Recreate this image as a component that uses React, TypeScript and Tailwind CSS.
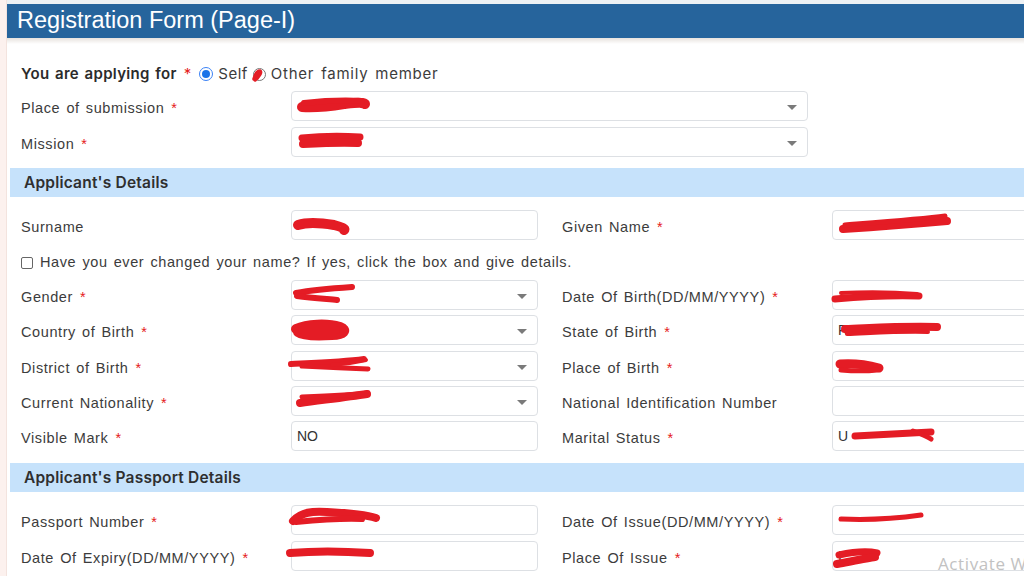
import React from "react";

const RED = "#e41c25";

type Scr = { d: string; w: number };

function Scribble({ s }: { s: Scr[] }) {
  return (
    <svg
      className="absolute left-0 top-0 overflow-visible pointer-events-none"
      width="10"
      height="10"
    >
      {s.map((p, i) => (
        <path
          key={i}
          d={p.d}
          stroke={RED}
          strokeWidth={p.w}
          strokeLinecap="round"
          strokeLinejoin="round"
          fill="none"
        />
      ))}
    </svg>
  );
}

function Caret() {
  return (
    <svg className="absolute right-[10px] top-[13px]" width="10" height="5" viewBox="0 0 10 5">
      <path d="M0 0 L10 0 L5 5 Z" fill="#7a7a7a" />
    </svg>
  );
}

function Field({
  select,
  value,
  s,
  w = "w-[247px]",
}: {
  select?: boolean;
  value?: string;
  s?: Scr[];
  w?: string;
}) {
  return (
    <div
      className={`relative ${w} h-[30px] shrink-0 rounded-[4px] border border-[#dde0e4] bg-white flex items-center pl-[5px] text-[14px] text-[#333]`}
    >
      {value && <span>{value}</span>}
      {select && <Caret />}
      {s && <Scribble s={s} />}
    </div>
  );
}

function Label({ text, req }: { text: string; req?: boolean }) {
  return (
    <div className="w-[270px] shrink-0 text-[14.5px] text-[#3c3c3c] tracking-[0.6px] [word-spacing:1.5px] pt-[6px]">
      {text}
      {req && <span className="text-[#e52020] ml-[7px]">*</span>}
    </div>
  );
}

function Section({ title }: { title: string }) {
  return (
    <div className="h-[29px] w-[1014px] bg-[#c6e2fb] flex items-center pl-[14px] font-['Inter',sans-serif] font-semibold text-[15.5px] text-[#2f2f2f] tracking-[0.2px]">
      {title}
    </div>
  );
}

function Row({
  mt,
  l,
  r,
}: {
  mt: string;
  l: [string, boolean, React.ReactNode];
  r?: [string, boolean, React.ReactNode];
}) {
  return (
    <div className={`flex items-center pl-[11px] h-[30px] ${mt}`}>
      <Label text={l[0]} req={l[1]} />
      {l[2]}
      {r && (
        <>
          <div className="w-[24px] shrink-0" />
          <Label text={r[0]} req={r[1]} />
          {r[2]}
        </>
      )}
    </div>
  );
}

export default function App() {
  return (
    <div className="w-[1024px] h-[576px] overflow-hidden relative bg-white flex font-['Liberation_Sans',Arial,sans-serif]">
      <div className="w-[7px] shrink-0 bg-[#fcf1ee] border-r border-[#f3e3de]" />
      <div className="flex-1 flex flex-col min-w-0">
        <div className="h-[4px] bg-[#edf1f4]" />
        <div className="h-[34px] bg-[#26649c] flex items-center pl-[10px] text-white text-[23.5px]">
          Registration Form (Page-I)
        </div>
        <div className="h-[6px] bg-gradient-to-b from-[#e7e2dd] to-white" />

        <div className="pl-[3px] flex flex-col">
          {/* applying for */}
          <div className="mt-[20px] h-[20px] pl-[11px] flex items-center font-['Inter',sans-serif] text-[15px]">
            <span className="font-semibold text-[#2b2b2b] tracking-[0.3px] [word-spacing:1.5px]">
              You are applying for
            </span>
            <span className="text-[#e52020] ml-[7px]">*</span>
            <span className="ml-[8px] w-[14px] h-[14px] rounded-full border border-[#3b82f6] flex items-center justify-center bg-white">
              <span className="w-[8px] h-[8px] rounded-full bg-[#1a73e8]" />
            </span>
            <span className="ml-[5px] text-[#3c3c3c] text-[15px] tracking-[0.5px]">Self</span>
            <span className="relative ml-[5px] w-[13px] h-[13px] rounded-full border border-[#777] bg-white">
              <svg className="absolute left-0 top-0 overflow-visible" width="10" height="10">
                <path d="M0 10 C1 6, 3 2, 6 2 C8 3, 5 8, 1 11" stroke={RED} strokeWidth="3.5" strokeLinecap="round" fill={RED} />
              </svg>
            </span>
            <span className="ml-[5px] text-[#3c3c3c] text-[15px] tracking-[0.75px] [word-spacing:2px]">
              Other family member
            </span>
          </div>

          <Row
            mt="mt-[7px]"
            l={[
              "Place of submission",
              true,
              <Field
                select
                w="w-[517px]"
                s={[
                  { d: "M10 15 C25 16, 40 14, 52 12 C62 11, 70 10, 73 12", w: 10 },
                  { d: "M12 11 C30 9, 50 8, 70 9", w: 6 },
                ]}
              />,
            ]}
          />
          <Row
            mt="mt-[6px]"
            l={[
              "Mission",
              true,
              <Field
                select
                w="w-[517px]"
                s={[
                  { d: "M10 10 C30 8, 50 8, 68 9", w: 7 },
                  { d: "M11 16 C30 15, 50 14, 66 15", w: 8 },
                ]}
              />,
            ]}
          />

          <div className="mt-[11px]">
            <Section title="Applicant's Details" />
          </div>

          <Row
            mt="mt-[13px]"
            l={[
              "Surname",
              false,
              <Field
                s={[
                  { d: "M6 14 C15 11, 30 12, 42 14 C50 16, 54 18, 52 19", w: 10 },
                ]}
              />,
            ]}
            r={[
              "Given Name",
              true,
              <Field
                s={[
                  { d: "M10 18 C40 16, 80 13, 114 10", w: 8 },
                  { d: "M12 14 C50 11, 90 8, 112 5", w: 5 },
                ]}
              />,
            ]}
          />

          <div className="mt-[13px] h-[20px] pl-[11px] flex items-center text-[14.5px] text-[#3c3c3c] tracking-[0.6px] [word-spacing:1.5px]">
            <span className="w-[12px] h-[12px] rounded-[2px] border border-[#666] bg-white mr-[7px] shrink-0" />
            Have you ever changed your name? If yes, click the box and give details.
          </div>

          <Row
            mt="mt-[7px]"
            l={[
              "Gender",
              true,
              <Field
                select
                s={[
                  { d: "M4 12 C20 9, 45 7, 60 6", w: 6 },
                  { d: "M5 15 C20 17, 35 18, 45 19", w: 6 },
                ]}
              />,
            ]}
            r={[
              "Date Of Birth(DD/MM/YYYY)",
              true,
              <Field
                s={[
                  { d: "M2 18 C25 16, 55 14, 86 15", w: 7 },
                  { d: "M8 12 C30 11, 60 11, 84 13", w: 4 },
                ]}
              />,
            ]}
          />
          <Row
            mt="mt-[5.25px]"
            l={[
              "Country of Birth",
              true,
              <Field
                select
                s={[
                  { d: "M4 13 C15 8, 35 7, 48 11 C56 14, 52 19, 40 19 C25 20, 10 19, 6 16", w: 10 },
                  { d: "M10 14 L44 14", w: 8 },
                ]}
              />,
            ]}
            r={[
              "State of Birth",
              true,
              <Field
                value="R"
                s={[
                  { d: "M12 13 C40 12, 70 10, 104 11", w: 8 },
                  { d: "M14 18 C40 17, 70 15, 95 16", w: 4 },
                ]}
              />,
            ]}
          />
          <Row
            mt="mt-[5.25px]"
            l={[
              "District of Birth",
              true,
              <Field
                select
                s={[
                  { d: "M-1 12 C20 11, 50 10, 72 7", w: 6 },
                  { d: "M10 14 C30 15, 55 16, 76 17", w: 5 },
                  { d: "M40 13 C55 12, 65 10, 74 8", w: 4 },
                ]}
              />,
            ]}
            r={[
              "Place of Birth",
              true,
              <Field
                s={[
                  { d: "M7 12 C20 11, 35 13, 46 16", w: 9 },
                  { d: "M8 18 C20 19, 35 19, 44 18", w: 5 },
                ]}
              />,
            ]}
          />
          <Row
            mt="mt-[5.25px]"
            l={[
              "Current Nationality",
              true,
              <Field
                select
                s={[
                  { d: "M8 16 C30 13, 55 10, 75 7", w: 8 },
                  { d: "M10 10 C35 9, 60 8, 76 6", w: 5 },
                ]}
              />,
            ]}
            r={["National Identification Number", false, <Field />]}
          />
          <Row
            mt="mt-[5.25px]"
            l={["Visible Mark", true, <Field value="NO" />]}
            r={[
              "Marital Status",
              true,
              <Field
                value="U"
                s={[
                  { d: "M22 14 C45 13, 75 11, 98 10", w: 7 },
                  { d: "M80 9 C88 12, 95 15, 98 17", w: 5 },
                ]}
              />,
            ]}
          />

          <div className="mt-[12px]">
            <Section title="Applicant's Passport Details" />
          </div>

          <Row
            mt="mt-[13px]"
            l={[
              "Passport Number",
              true,
              <Field
                s={[
                  { d: "M1 15 C10 6, 20 5, 35 6 C55 7, 75 9, 84 12", w: 8 },
                  { d: "M4 16 C25 14, 50 12, 70 13", w: 6 },
                ]}
              />,
            ]}
            r={[
              "Date Of Issue(DD/MM/YYYY)",
              true,
              <Field
                s={[
                  { d: "M8 13 C30 14, 60 13, 88 9", w: 5 },
                ]}
              />,
            ]}
          />
          <Row
            mt="mt-[6px]"
            l={[
              "Date Of Expiry(DD/MM/YYYY)",
              true,
              <Field
                s={[
                  { d: "M-2 11 C20 9, 50 9, 78 11", w: 8 },
                ]}
              />,
            ]}
            r={[
              "Place Of Issue",
              true,
              <Field
                value="I"
                s={[
                  { d: "M6 13 C20 10, 35 9, 44 11", w: 7 },
                  { d: "M4 22 C20 19, 35 16, 42 15", w: 8 },
                ]}
              />,
            ]}
          />
        </div>
      </div>
      <div className="absolute left-[938px] top-[551px] text-[17px] text-[#c2c2c2] tracking-[0.6px] font-['Open_Sans',sans-serif] whitespace-nowrap">
        Activate W
      </div>
    </div>
  );
}
